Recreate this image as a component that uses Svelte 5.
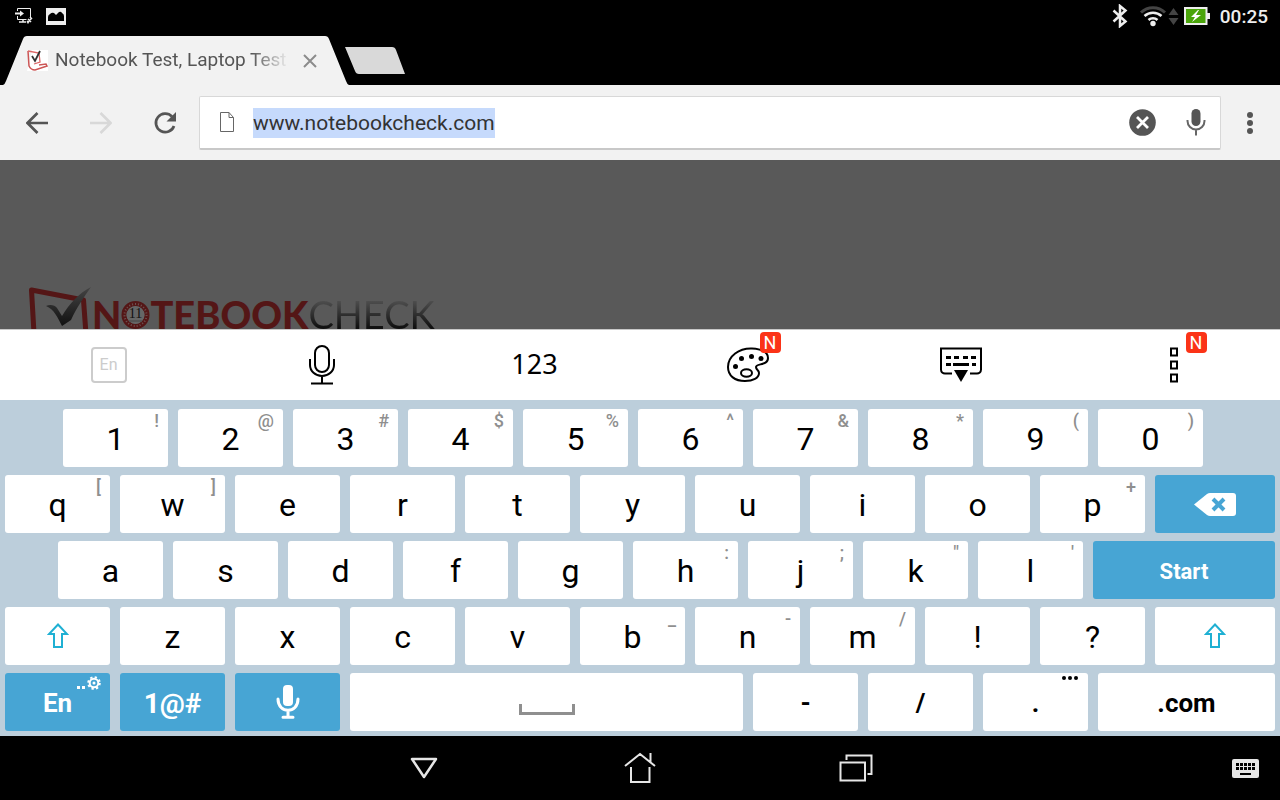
<script lang="ts">
    import { onMount } from 'svelte';

    type Key = {
        label?: string
        hint?: string
        width?: number
        kind?: string
        icon?: string
        name?: string
    }

    let url = $state('www.notebookcheck.com')
    let urlInput: HTMLInputElement

    const rows: Key[][] = [
        [
            { kind: 'spacer', width: 48 },
            { label: '1', hint: '!' },
            { label: '2', hint: '@' },
            { label: '3', hint: '#' },
            { label: '4', hint: '$' },
            { label: '5', hint: '%' },
            { label: '6', hint: '^' },
            { label: '7', hint: '&' },
            { label: '8', hint: '*' },
            { label: '9', hint: '(' },
            { label: '0', hint: ')' },
            { kind: 'spacer', width: 62 }
        ],
        [
            { label: 'q', hint: '[' },
            { label: 'w', hint: ']' },
            { label: 'e' },
            { label: 'r' },
            { label: 't' },
            { label: 'y' },
            { label: 'u' },
            { label: 'i' },
            { label: 'o' },
            { label: 'p', hint: '+' },
            { kind: 'blue', icon: 'backspace', name: 'Backspace', width: 120 }
        ],
        [
            { kind: 'spacer', width: 43 },
            { label: 'a' },
            { label: 's' },
            { label: 'd' },
            { label: 'f' },
            { label: 'g' },
            { label: 'h', hint: ':' },
            { label: 'j', hint: ';' },
            { label: 'k', hint: '"' },
            { label: 'l', hint: "'" },
            { kind: 'blue start', label: 'Start', width: 182 }
        ],
        [
            { icon: 'shift', name: 'Shift' },
            { label: 'z' },
            { label: 'x' },
            { label: 'c' },
            { label: 'v' },
            { label: 'b', hint: '_' },
            { label: 'n', hint: '-' },
            { label: 'm', hint: '/' },
            { label: '!' },
            { label: '?' },
            { icon: 'shift', name: 'Shift', width: 120 }
        ],
        [
            { kind: 'blue bold', label: 'En', icon: 'gear' },
            { kind: 'blue symbols', label: '1@#' },
            { kind: 'blue', icon: 'mic', name: 'Voice input' },
            { icon: 'space', name: 'Space', width: 393 },
            { kind: 'bold', label: '-' },
            { kind: 'bold', label: '/' },
            { kind: 'bold', label: '.', icon: 'more' },
            { kind: 'bold', label: '.com', width: 177 }
        ]
    ]

    onMount(() => {
        urlInput.focus()
        urlInput.select()
    })

    function press(key: Key) {
        if (key.icon == 'backspace') {
            url = url.slice(0, -1)
        } else if (key.icon == 'space') {
            url += ' '
        } else if (key.label && !key.kind?.includes('blue')) {
            url += key.label
        }
    }
</script>

<div class="screen">
    <header class="status">
        <div class="status-side">
            <svg width="18" height="16" viewBox="0 0 18 16" fill="none" stroke="#eee">
                <path d="M2.5 3V.5h13V9M2.5 8v3.500h9" />
                <path d="M0 5.500h6" stroke-width="2" />
                <path d="M5 2.500l4 3-4 3z" fill="#eee" stroke="none" />
                <path d="M4 14h7M8 11.500V14" stroke-width="1.500" />
                <path d="M12 15l4-4M13 11l3 3M15 9l2 2M12 13l2 2" stroke-width="1.500" />
            </svg>
            <svg width="20" height="17" viewBox="0 0 20 17">
                <rect width="20" height="17" fill="#eee" />
                <path d="M2 13V9q0-2 2-3 2-2 4-1l2 2 3-3q2-1 3 1 2 1 2 3v5z" fill="#000" />
            </svg>
        </div>
        <div class="status-side right">
            <svg width="16" height="24" viewBox="0 0 16 24" fill="none" stroke="#eee" stroke-width="2.500">
                <path d="M1.500 6.500l12 11L8 22V2l5.500 4.500-12 11" />
            </svg>
            <svg class="wifi" width="38" height="22" viewBox="0 0 38 22" fill="none">
                <path d="M1 7.500a17.500 17.500 0 0 1 24 0" stroke="#444" stroke-width="3" />
                <path d="M4.500 11a12.500 12.500 0 0 1 17 0M8.500 15a6.500 6.500 0 0 1 9 0" stroke="#eee" stroke-width="2.500" />
                <circle cx="13" cy="18.500" r="2.700" fill="#eee" />
                <path d="M28.500 10l5-7 5 7zM28.500 13l5 7 5-7z" fill="#444" />
            </svg>
            <svg width="26" height="18" viewBox="0 0 26 18">
                <rect x="1" y="1" width="21.500" height="16" fill="#4aa50a" stroke="#eee" stroke-width="2" />
                <path d="M23 6h3v6h-3z" fill="#eee" />
                <path d="M14 3L7 10h4l-3 5 9-7h-5l3-5z" fill="#fff" />
            </svg>
            <span class="clock">00:25</span>
        </div>
    </header>

    <div class="tabs">
        <div class="tab">
            <svg width="22" height="21" viewBox="0 0 22 21" fill="none">
                <path d="M5 0h16v21H0z" fill="#fff" />
                <path d="M1 1l1 15q2 4 6 4l12-4-1-2-7 1" stroke="#c55" stroke-width="1.500" />
                <path d="M1 1l11 2 1 9-6 2" stroke="#d66" stroke-width="1.300" />
                <path d="M5 6l3 5 5-10" stroke="#333" stroke-width="1.800" />
            </svg>
            <span class="title">Notebook Test, Laptop Test</span>
            <button aria-label="Close tab">
                <svg width="14" height="14" viewBox="0 0 14 14" stroke="#8c8c8c" stroke-width="2">
                    <path d="M1 1l12 12M13 1L1 13" />
                </svg>
            </button>
        </div>
        <button class="new-tab" aria-label="New tab"></button>
    </div>

    <div class="toolbar">
        <button class="nav-button" aria-label="Back">
            <svg width="22" height="22" viewBox="0 0 22 22" fill="none" stroke="#555" stroke-width="2.700">
                <path d="M22 11H2M11.500 1L1.500 11l10 10" />
            </svg>
        </button>
        <button class="nav-button" aria-label="Forward" disabled>
            <svg width="22" height="22" viewBox="0 0 22 22" fill="none" stroke="#d8d8d8" stroke-width="2.700">
                <path d="M0 11h20M10.500 1l10 10-10 10" />
            </svg>
        </button>
        <button class="nav-button" aria-label="Reload">
            <svg width="24" height="24" viewBox="0 0 24 24" fill="none">
                <path d="M19 5.500A9.300 9.300 0 1 0 21 15" stroke="#555" stroke-width="2.700" />
                <path d="M23 1v9.500h-9.500z" fill="#555" />
            </svg>
        </button>
        <div class="omnibox">
            <svg width="14" height="20" viewBox="0 0 14 20" fill="none" stroke="#666">
                <path d="M.5.5h8.500l4.500 5v14H.5zM9 .5v5h4.500" />
            </svg>
            <input bind:this={urlInput} bind:value={url} type="text" aria-label="Address" spellcheck="false">
            <button aria-label="Clear address" onclick={() => url = ''}>
                <svg width="27" height="27" viewBox="0 0 27 27">
                    <circle cx="13.500" cy="13.500" r="13.300" fill="#555" />
                    <path d="M8 8l11 11M19 8L8 19" stroke="#fff" stroke-width="2.800" />
                </svg>
            </button>
            <button aria-label="Voice search">
                <svg width="20" height="28" viewBox="0 0 20 28" fill="none" stroke="#666" stroke-width="2">
                    <rect x="5.500" y="1" width="9" height="17" rx="4.500" fill="#555" stroke="none" />
                    <path d="M1.500 12v1a8.500 8.500 0 0 0 17 0v-1M10 21v6.500" />
                </svg>
            </button>
        </div>
        <button class="menu-button" aria-label="Menu">
            <svg width="6" height="22" viewBox="0 0 6 22" fill="#555">
                <circle cx="3" cy="3" r="3" />
                <circle cx="3" cy="11" r="3" />
                <circle cx="3" cy="19" r="3" />
            </svg>
        </button>
    </div>

    <main>
        <a class="logo" href="#home" aria-label="Notebookcheck">
            <svg class="mark" width="63" height="44" viewBox="0 0 63 44" fill="none">
                <defs>
                    <linearGradient id="check" x1="0" y1="0" x2="0" y2="1">
                        <stop offset="0" stop-color="#444" />
                        <stop offset="1" stop-color="#111" />
                    </linearGradient>
                </defs>
                <path d="M5 46L2.500 3l52 10 2.500 34" stroke="#541616" stroke-width="5" stroke-linejoin="round" />
                <path d="M17 19c4-2 9-1 11 2l5 8C41 16 50 6 62 0 55 10 48 20 42 33l-9 6c-4-8-8-17-16-20z" fill="url(#check)" />
            </svg>
            <span class="note">N</span>
            <svg class="badge-o" width="29" height="28" viewBox="0 0 29 28" fill="none">
                <circle cx="14.500" cy="14" r="11.500" stroke="#541616" stroke-width="5" />
                <circle cx="14.500" cy="14" r="11" stroke="#6d5353" stroke-dasharray="1 2" stroke-width="2" />
                <circle cx="14.500" cy="14" r="9" fill="#666" />
                <text x="14.500" y="17" text-anchor="middle" font-family="Liberation Serif, serif" font-size="14" fill="#111">11</text>
                <path d="M8 20h13" stroke="#444" />
            </svg>
            <span class="note">TEBOOK</span><span class="check">CHECK</span>
        </a>
    </main>

    <section class="tools">
        <button aria-label="Language">
            <span class="lang">En</span>
        </button>
        <button aria-label="Voice">
            <svg width="26" height="40" viewBox="0 0 26 40" fill="none" stroke="#000" stroke-width="2">
                <rect x="6" y="1" width="14" height="26" rx="7" />
                <path d="M1 14v6a12 11 0 0 0 24 0v-6M13 32v6M2 38.500h22" />
            </svg>
        </button>
        <button class="numbers">123</button>
        <button aria-label="Themes">
            <span class="tool">
                <svg width="42" height="36" viewBox="0 0 42 36" fill="none" stroke="#000" stroke-width="2">
                    <path d="M25 1.500C12 1 1 9 1 20c0 9 7 14 17 14 8 0 14-3 14-8 0-3-3-3-3-6 0-4 12-1 12-9 0-6-7-9-16-9.500z" />
                    <ellipse cx="19.500" cy="26" rx="5.500" ry="3.700" />
                    <g fill="#000" stroke="none">
                        <circle cx="8.500" cy="19.500" r="2.500" />
                        <circle cx="14.500" cy="11.500" r="2.500" />
                        <circle cx="24.500" cy="9.500" r="2.500" />
                        <circle cx="34" cy="11.500" r="2.500" />
                    </g>
                </svg>
                <span class="badge">N</span>
            </span>
        </button>
        <button aria-label="Hide keyboard">
            <svg width="42" height="36" viewBox="0 0 42 36" fill="none" stroke="#000" stroke-width="2">
                <path d="M12 26.500H5c-2 0-4-1.500-4-4V1.500h40v21c0 2.500-2 4-4 4h-7" />
                <path d="M6 10.500h5M14 10.500h5M23 10.500h5M31 10.500h5M6 17.500h5M13 17.500h16M32 17.500h4" stroke-width="3" />
                <path d="M14 23h14l-7 12z" fill="#000" stroke="none" />
            </svg>
        </button>
        <button aria-label="More tools">
            <span class="tool more">
                <svg width="10" height="36" viewBox="0 0 10 36" fill="none" stroke="#000" stroke-width="2">
                    <path d="M2 1.500h6v7H2zM2 14.500h6v7H2zM2 27.500h6v7H2z" />
                </svg>
                <span class="badge">N</span>
            </span>
        </button>
    </section>

    <section class="keyboard">
        {#each rows as row}
            <div class="row">
                {#each row as key}
                    {#if key.kind == 'spacer'}
                        <span class="spacer" style="flex-grow: {key.width}"></span>
                    {:else}
                        <button class="key {key.kind ?? ''}" style="flex-grow: {key.width ?? 105}" aria-label={key.name} onclick={() => press(key)}>
                            {#if key.label}
                                <span class="label">{key.label}</span>
                            {/if}
                            {#if key.hint}
                                <span class="hint">{key.hint}</span>
                            {/if}
                            {#if key.icon == 'backspace'}
                                <svg width="42" height="23" viewBox="0 0 42 23">
                                    <path d="M0 11.500L13 1q1.500-1 3-1h23q3 0 3 3v17q0 3-3 3H16q-1.500 0-3-1z" fill="#fff" />
                                    <path d="M19 6l11 11M30 6L19 17" stroke="#47a5d4" stroke-width="4" />
                                </svg>
                            {:else if key.icon == 'shift'}
                                <svg width="22" height="26" viewBox="0 0 22 26" fill="none" stroke="#1fb0d3" stroke-width="2">
                                    <path d="M11 1.500l9 9.500h-5v13H7V11H2z" />
                                </svg>
                            {:else if key.icon == 'mic'}
                                <svg width="24" height="34" viewBox="0 0 24 34" fill="none" stroke="#fff" stroke-width="3" stroke-linecap="round">
                                    <rect x="7" width="10" height="21" rx="4" fill="#fff" stroke="none" />
                                    <path d="M2 14c0 15 20 15 20 0M12 26v6M7 32.300h10" />
                                </svg>
                            {:else if key.icon == 'space'}
                                <svg class="space" width="56" height="11" viewBox="0 0 56 11" fill="none" stroke="#8f8f8f">
                                    <path d="M1.500 0v9.500h53V0" stroke-width="3" />
                                </svg>
                            {:else if key.icon == 'gear'}
                                <svg class="corner" width="24" height="14" viewBox="0 0 24 14" fill="none" stroke="#fff">
                                    <path d="M0 11.500h3M5 11.500h3" stroke-width="3" />
                                    <circle cx="17" cy="7" r="4.300" stroke-width="2" />
                                    <circle cx="17" cy="7" r="5.800" stroke-width="2" stroke-dasharray="2.300 2.255" />
                                    <circle cx="17" cy="7" r="1.500" fill="#fff" stroke="none" />
                                </svg>
                            {:else if key.icon == 'more'}
                                <svg class="corner" width="18" height="6" viewBox="0 0 18 6">
                                    <circle cx="3" cy="2" r="2" />
                                    <circle cx="9" cy="2" r="2" />
                                    <circle cx="15" cy="2" r="2" />
                                </svg>
                            {/if}
                        </button>
                    {/if}
                {/each}
            </div>
        {/each}
    </section>

    <nav>
        <div class="system">
            <button aria-label="Hide">
                <svg width="28" height="22" viewBox="0 0 28 22" fill="none" stroke="#e6e6e6" stroke-width="2.500">
                    <path d="M2 2h24L14 20z" stroke-linejoin="round" />
                </svg>
            </button>
            <button aria-label="Home">
                <svg width="32" height="32" viewBox="0 0 32 32" fill="none" stroke="#e6e6e6" stroke-width="2">
                    <path d="M1 14L16 2l15 12M26.500 1v9M7 15v15h18.500V15" />
                </svg>
            </button>
            <button aria-label="Recent apps">
                <svg width="34" height="28" viewBox="0 0 34 28" fill="none" stroke="#e6e6e6" stroke-width="2">
                    <path d="M1.500 8.500H26v18H1.500zM7.500 6V1.500h25v18.500h-4" />
                </svg>
            </button>
        </div>
        <button class="ime" aria-label="Choose keyboard">
            <svg width="27" height="19" viewBox="0 0 27 19">
                <rect width="27" height="19" rx="2" fill="#e6e6e6" />
                <path d="M4 5.500h19M4 9.500h19" stroke="#000" stroke-width="3" stroke-dasharray="3 1" />
                <path d="M8 15h11" stroke="#000" stroke-width="2" />
            </svg>
        </button>
    </nav>
</div>

<style>
    :global(body) {
        margin: 0;
        background: black;
    }

    .screen {
        display: flex;
        flex-direction: column;
        height: 100vh;
        overflow: hidden;
        font-family: Roboto, "Liberation Sans", sans-serif;
        color: black;
    }

    button {
        display: flex;
        align-items: center;
        justify-content: center;
        margin: 0;
        padding: 0;
        border: none;
        background: none;
        font: inherit;
        color: inherit;
    }

    svg {
        display: block;
        flex-shrink: 0;
    }

    .status {
        display: flex;
        justify-content: space-between;
        align-items: center;
        height: 32px;
        padding: 0 12px 0 15px;
    }

    .status-side {
        display: flex;
        align-items: center;
        gap: 13px;
    }

    .status-side.right {
        gap: 10px;
    }

    .wifi {
        margin: 0 -4px 0 2px;
        overflow: visible;
    }

    .clock {
        font-size: 19px;
        font-weight: 500;
        line-height: 24px;
        padding-top: 2px;
        color: #eee;
    }

    .tabs {
        display: flex;
        align-items: center;
        height: 49px;
        padding-top: 4px;
    }

    .tab {
        display: flex;
        align-items: center;
        box-sizing: border-box;
        width: 350px;
        height: 49px;
        padding-left: 27px;
        background: #f2f2f2;
        clip-path: path("M3 49Q5 48 6 45L23 3Q24 0 27 0H325Q328 0 329 3L346 45Q347 48 349 49Z");
    }

    .title {
        width: 234px;
        margin-left: 6px;
        padding-bottom: 2px;
        overflow: hidden;
        white-space: nowrap;
        font-size: 19px;
        line-height: 28px;
        color: #555;
        mask-image: linear-gradient(to right, black 84%, transparent);
    }

    .tab button {
        width: 41px;
        height: 40px;
    }

    .new-tab {
        width: 60px;
        height: 27px;
        margin-left: -5px;
        background: #d9d9d9;
        clip-path: path("M0 0H47Q50 0 51 3L60 27H14Q11 27 10 24Z");
    }

    .toolbar {
        display: flex;
        align-items: center;
        height: 75px;
        padding-left: 5px;
        background: #f2f2f2;
    }

    .nav-button {
        width: 64px;
        height: 54px;
    }

    .omnibox {
        display: flex;
        flex: 1;
        align-items: center;
        gap: 6px;
        box-sizing: border-box;
        height: 54px;
        margin-left: 2px;
        padding-left: 20px;
        background: white;
        border: 1px solid #d8d8d8;
        border-bottom: 2px solid #c8c8c8;
        border-radius: 2px;
    }

    .omnibox input {
        flex: 1;
        min-width: 0;
        height: 30px;
        margin: 2px 0 0 13px;
        padding: 0;
        border: none;
        outline: none;
        background: none;
        font: inherit;
        font-size: 21px;
        line-height: 30px;
        color: #333;
    }

    .omnibox input::selection {
        background: #c6dafc;
        color: #333;
    }

    .omnibox button {
        width: 48px;
        height: 50px;
    }

    .menu-button {
        width: 58px;
        height: 54px;
        margin-right: 1px;
    }

    main {
        flex: 1;
        min-height: 0;
        overflow: hidden;
        background: #595959;
    }

    .logo {
        display: flex;
        align-items: flex-start;
        padding: 127px 0 0 29px;
        font-family: Lato, sans-serif;
        font-size: 38px;
        line-height: 54px;
        text-decoration: none;
    }

    .note {
        font-weight: 900;
        color: #541616;
    }

    .badge-o {
        margin-top: 14px;
    }

    .check {
        font-weight: 400;
        color: transparent;
        background: linear-gradient(#555 20%, #111 75%);
        background-clip: text;
    }

    .tools {
        display: grid;
        grid-template-columns: repeat(6, 1fr);
        height: 70px;
        padding-left: 2px;
        background: white;
        border-top: 1px solid #c8c8c8;
    }

    .lang {
        width: 32px;
        line-height: 32px;
        border: 2px solid #ccc;
        border-radius: 4px;
        font-size: 16px;
        color: #ccc;
    }

    .numbers {
        padding-bottom: 4px;
        font-family: "Noto Sans", sans-serif;
        font-size: 27px;
    }

    .tool {
        position: relative;
    }

    .badge {
        position: absolute;
        top: -15px;
        left: 33px;
        width: 21px;
        font-size: 18px;
        line-height: 21px;
        color: white;
        background: #fb3317;
        border-radius: 4px;
    }

    .more .badge {
        left: 17px;
    }

    .keyboard {
        display: flex;
        flex-direction: column;
        gap: 8px;
        padding: 9px 5px 5px;
        background: #bccedb;
    }

    .row {
        display: flex;
        gap: 10px;
    }

    .spacer {
        flex-basis: 0;
    }

    .key {
        position: relative;
        flex-basis: 0;
        min-width: 0;
        height: 58px;
        background: white;
        border-radius: 3px;
        font-size: 32px;
    }

    .label {
        padding-top: 2px;
    }

    .key.bold {
        font-size: 26px;
        font-weight: 700;
    }

    .key.symbols {
        font-size: 28px;
        font-weight: 700;
    }

    .key.start {
        font-size: 22px;
        font-weight: 700;
    }

    .key.blue {
        background: #47a5d4;
        color: white;
    }

    .hint {
        position: absolute;
        top: 1px;
        right: 9px;
        font-size: 18px;
        line-height: 22px;
        font-weight: 500;
        color: #8f8f8f;
    }

    .corner {
        position: absolute;
        top: 3px;
        right: 9px;
    }

    .space {
        margin-top: 14px;
    }

    nav {
        display: grid;
        grid-template-columns: 1fr auto 1fr;
        align-items: center;
        height: 64px;
        flex-shrink: 0;
    }

    .system {
        display: flex;
        grid-column: 2;
    }

    .system button {
        width: 216px;
        height: 64px;
    }

    .ime {
        justify-self: end;
        width: 70px;
        height: 64px;
    }
</style>
